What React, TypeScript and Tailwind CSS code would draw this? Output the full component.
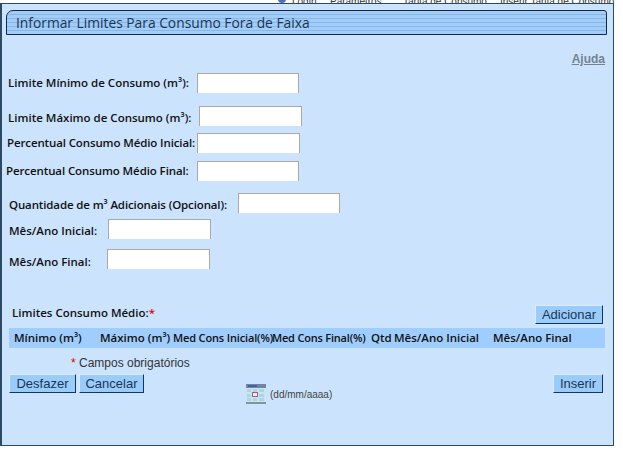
const labelClass = "text-[11.5px] font-semibold text-[#111] whitespace-nowrap"

function Row({ label, className, gap, wide }: { label: string; className: string; gap: string; wide?: boolean }) {
  return (
    <div className={`flex items-center h-[20px] ${className}`}>
      <span className={`${labelClass} ${gap}`}>{label}</span>
      <div className={`h-[20px] ${wide ? 'w-[103px]' : 'w-[102px]'} bg-white border-t border-r border-[#a9a9a9] border-l border-b-0`} />
    </div>
  )
}

function Btn({ children, className = '' }: { children: string; className?: string }) {
  return (
    <button className={`h-[19px] bg-[#9accfb] text-[#1c3552] text-[13px] leading-none font-['Liberation_Sans',sans-serif] border border-t-[#dcecff] border-l-[#dcecff] border-r-[#12365c] border-b-[#12365c] ${className}`}>
      {children}
    </button>
  )
}

export default function App() {
  return (
    <div className="w-[623px] h-[460px] bg-white overflow-hidden relative font-['Open_Sans',sans-serif]">
      <div className="h-[3px] overflow-hidden flex pl-[278px] text-[10px] leading-[4px] text-[#333] font-['Liberation_Sans',sans-serif]">
        <span className="w-[8px] h-[8px] -mt-[5px] rounded-full bg-[#4a72b8] mr-[6px]" />
        <span className="w-[38px]">Login</span>
        <span className="w-[73px]">Parâmetros</span>
        <span className="w-[97px]">Tarifa de Consumo</span>
        <span>Inserir Tarifa de Consumo</span>
      </div>
      <div className="w-[614px] h-[443px] bg-[#cbe3fd] border border-[#2c4a66] border-l-2 pt-[6px] pl-[4px] flex flex-col">
        {/* Titulo */}
        <div className="w-[601px] h-[25px] shrink-0 rounded-tl-[7px] rounded-tr-[3px] border border-[#10294a] px-[9px] pt-[1px] flex items-center text-[13.8px] text-[#1c3552] bg-[repeating-linear-gradient(180deg,#a3cdf7_0px,#a3cdf7_3px,#85b8ec_3px,#85b8ec_4px)]">
          Informar Limites Para Consumo Fora de Faixa
        </div>

        <div className="flex justify-end pr-[8px] mt-[15px] h-[16px]">
          <span className="text-[12px] font-bold underline text-[#74838f] font-['Liberation_Sans',sans-serif]">Ajuda</span>
        </div>

        <Row label="Limite Mínimo de Consumo (m³):" gap="mr-[8px]" className="mt-[7px] ml-[2px]" />
        <Row label="Limite Máximo de Consumo (m³):" gap="mr-[8px] pt-[4px]" className="mt-[13px] ml-[2px]" wide />
        <Row label="Percentual Consumo Médio Inicial:" gap="mr-[2px] tracking-[-0.12px]" className="mt-[7px] ml-[1px]" wide />
        <Row label="Percentual Consumo Médio Final:" gap="mr-[8px] tracking-[-0.1px]" className="mt-[8px]" />
        <Row label="Quantidade de m³ Adicionais (Opcional):" gap="mr-[11px] tracking-[-0.13px] pt-[4px]" className="mt-[12px] ml-[3px]" />
        <Row label="Mês/Ano Inicial:" gap="mr-[11px] pt-[4px]" className="mt-[6px] ml-[3px]" wide />
        <Row label="Mês/Ano Final:" gap="mr-[16px] pt-[6px]" className="mt-[10px] ml-[3px]" wide />

        <div className="flex items-center justify-between mt-[35px] ml-[6px] w-[591px] h-[20px]">
          <span className={`${labelClass} -mt-[2px]`}>
            Limites Consumo Médio:<span className="text-[#e00000]">*</span>
          </span>
          <Btn className="w-[68px]">Adicionar</Btn>
        </div>

        <div className="mt-[4px] ml-[3px] w-[596px] h-[20px] bg-[#9fcdfd] flex items-center text-[11.5px] font-semibold text-[#111] whitespace-nowrap">
          <span className="ml-[5px] w-[86px]">Mínimo (m³)</span>
          <span className="w-[73px]">Máximo (m³)</span>
          <span className="w-[99px] text-[11px] tracking-[-0.15px]">Med Cons Inicial(%)</span>
          <span className="w-[99px] text-[11px] tracking-[-0.2px]">Med Cons Final(%)</span>
          <span className="w-[23px]">Qtd</span>
          <span className="w-[99px]">Mês/Ano Inicial</span>
          <span>Mês/Ano Final</span>
        </div>

        <div className="mt-[8px] ml-[65px] h-[14px] text-[12px] leading-[14px] text-[#333] font-['Liberation_Sans',sans-serif]">
          <span className="text-[#e00000]">*</span> Campos obrigatórios
        </div>

        <div className="mt-[4px] ml-[3px] w-[594px] flex items-start">
          <Btn className="w-[67px]">Desfazer</Btn>
          <Btn className="w-[65px] ml-[3px]">Cancelar</Btn>
          <div className="ml-[102px] mt-[10px] flex items-center">
            <svg width="20" height="20" viewBox="0 0 20 20">
              <rect width="20" height="20" fill="#cfe3ef" />
              <rect width="20" height="4" fill="#6f86a8" />
              <rect x="2" y="1" width="9" height="2" fill="#4a5f9c" />
              <rect y="18" width="20" height="2" fill="#7f93a3" />
              <g fill="#a6d8e6">
                <rect x="1" y="5" width="4" height="3" />
                <rect x="7" y="5" width="4" height="3" />
                <rect x="13" y="5" width="5" height="3" />
                <rect x="1" y="14" width="4" height="3" />
                <rect x="7" y="14" width="4" height="3" />
                <rect x="13" y="14" width="5" height="3" />
                <rect x="13" y="10" width="5" height="3" />
                <rect x="1" y="10" width="4" height="3" />
              </g>
              <rect x="6.5" y="8.5" width="5" height="4" fill="#f1e6ea" stroke="#a0607b" />
            </svg>
            <span className="ml-[4px] mt-[2px] text-[10px] leading-[12px] text-[#444] font-['Liberation_Sans',sans-serif]">(dd/mm/aaaa)</span>
          </div>
          <Btn className="w-[50px] ml-auto">Inserir</Btn>
        </div>
      </div>
    </div>
  )
}
